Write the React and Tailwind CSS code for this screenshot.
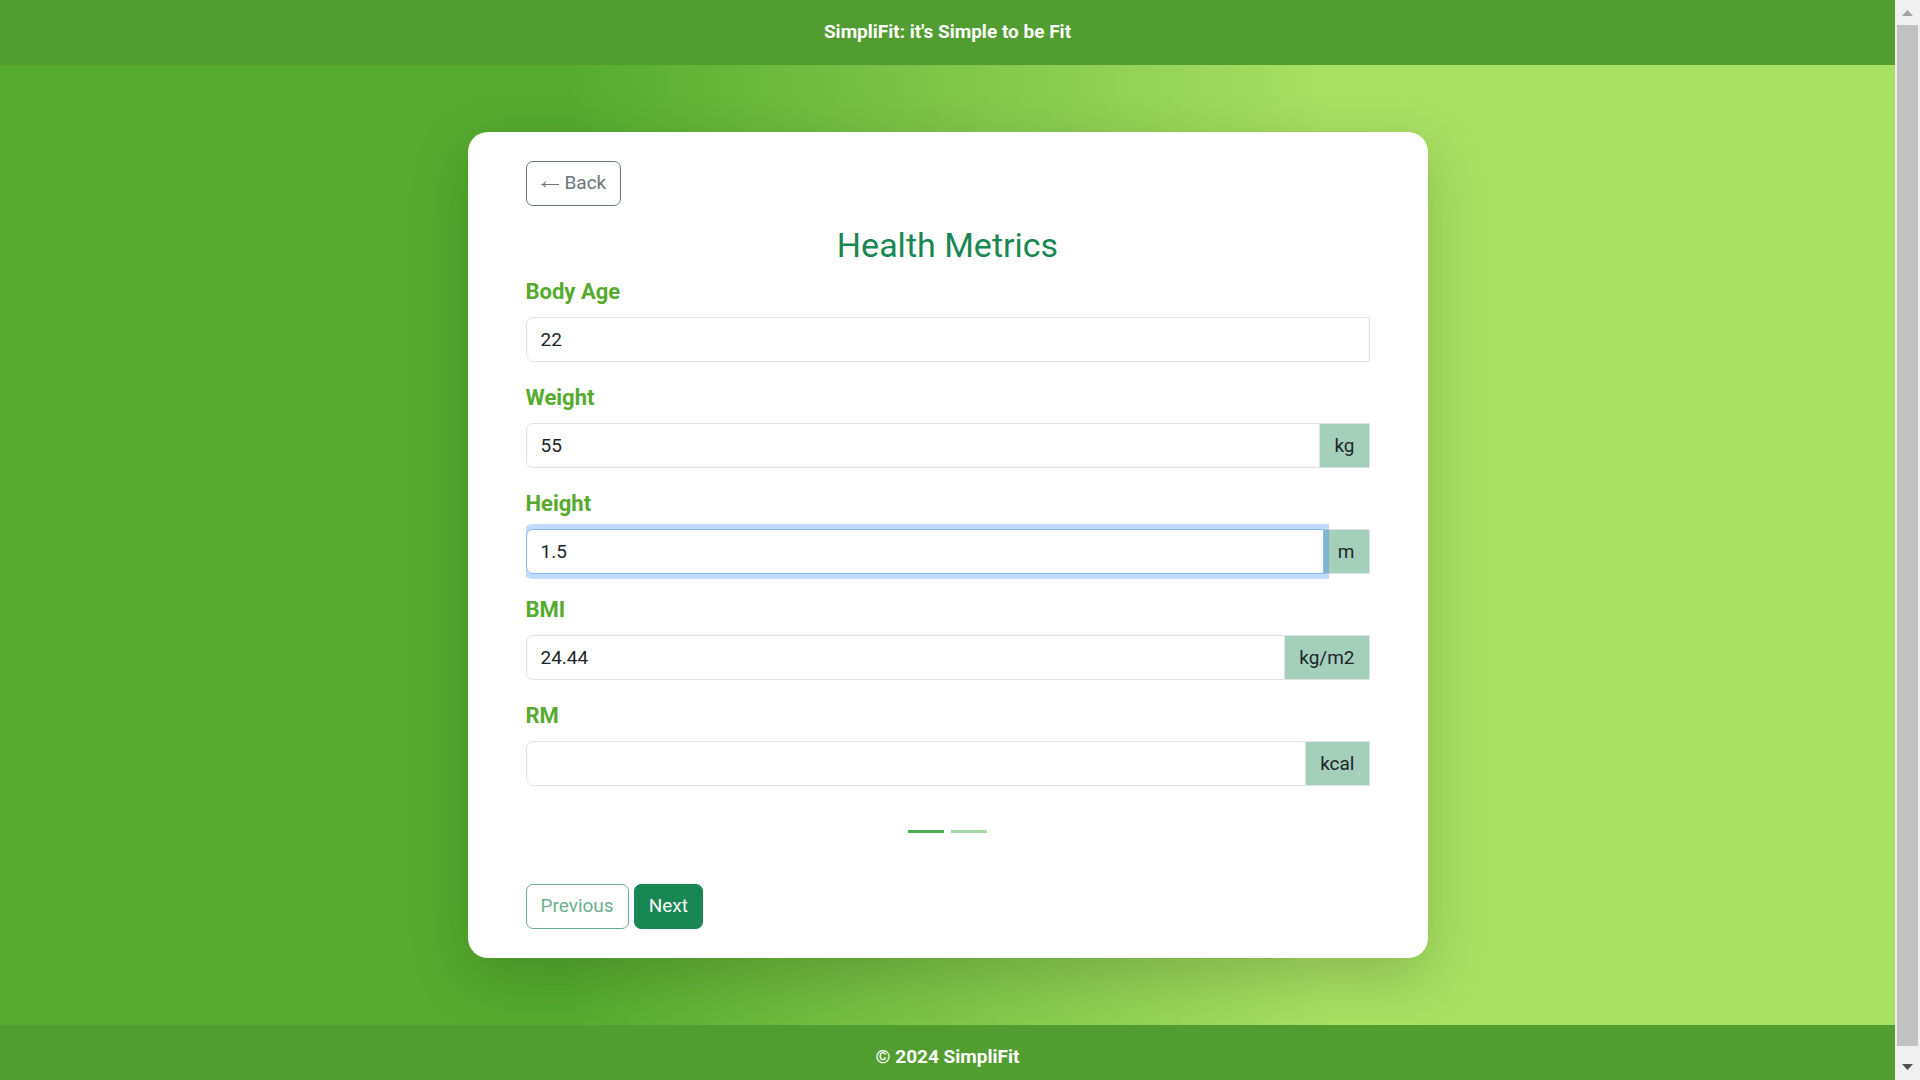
const metrics = [
  { id: "body-age", label: "Body Age", value: "22" },
  { id: "weight", label: "Weight", value: "55", unit: "kg" },
  { id: "height", label: "Height", value: "1.5", unit: "m", active: true },
  { id: "bmi", label: "BMI", value: "24.44", unit: "kg/m2" },
  { id: "rm", label: "RM", value: "", unit: "kcal" },
];

function MetricField({ id, label, value, unit, active }) {
  return (
    <div className="mb-[21px]">
      <label htmlFor={id} className="mb-[11px] block text-[22px] leading-[29px] font-bold text-[#56ab2f]">
        {label}
      </label>
      <div className="flex">
        <input
          id={id}
          type="text"
          defaultValue={value}
          className={
            "h-[45px] min-w-0 flex-1 rounded-l-[7px] border bg-white px-3.5 text-[19px] text-[#212529] outline-none " +
            (active
              ? "z-10 border-[#86b7fe] shadow-[0_0_0_5px_rgba(13,110,253,0.25)]"
              : "border-[#dee2e6]")
          }
        />
        {unit && (
          <span className="-ml-px flex items-center border border-[#dee2e6] bg-[#a3cfbb] px-3.5 text-[19px] text-[#212529]">
            {unit}
          </span>
        )}
      </div>
    </div>
  );
}

function ScrollTrack() {
  return (
    <div className="flex w-[25px] shrink-0 flex-col items-center bg-[#f0f0f0]" aria-hidden="true">
      <svg className="h-[25px] w-[25px]" viewBox="0 0 25 25" fill="#a3a3a3">
        <path d="M12.5 10 18 16H7z" />
      </svg>
      <div className="w-[21px] flex-1 bg-[#c1c1c1]" />
      <svg className="h-[34px] w-[25px]" viewBox="0 0 25 34" fill="#505050">
        <path d="M7 18h11l-5.500 6z" />
      </svg>
    </div>
  );
}

export default function App() {
  return (
    <div className="flex h-screen overflow-hidden font-[Roboto,sans-serif] text-[19px] leading-[29px] text-[#212529]">
      <div className="flex min-w-0 flex-1 flex-col overflow-hidden bg-[linear-gradient(to_right,#56ab2f_30%,#a8e063_70%)]">
        <header className="h-[65px] shrink-0 bg-[#529d30] pt-[17px] text-center font-bold text-white">
          SimpliFit: it's Simple to be Fit
        </header>

        <main className="flex shrink-0 flex-col items-center py-[67px]">
          <section className="w-full max-w-[960px] rounded-[20px] bg-white px-[58px] py-[29px] shadow-[0_19px_58px_rgba(0,0,0,0.175)]">
            <button
              type="button"
              className="flex h-[45px] items-center gap-1.5 rounded-[7px] border border-[#6c757d] px-3.5 pb-0.5 text-[#6c757d]"
            >
              <svg className="mt-1 h-[9px] w-[18px]" viewBox="0 0 18 9" fill="none" stroke="currentColor" aria-hidden="true">
                <path d="M1 4.500H18" />
                <path d="M4.500 1.500Q3.500 4 .500 4.500 3.500 5 4.500 7.500L3.500 4.500z" fill="currentColor" strokeWidth=".6" />
              </svg>
              Back
            </button>

            <div className="mt-[19px] overflow-hidden">
              <h2 className="mb-3 text-center text-[34px] leading-10 font-normal text-[#198754]">
                Health Metrics
              </h2>
              <form>
                {metrics.map((metric) => (
                  <MetricField key={metric.id} {...metric} />
                ))}
              </form>
            </div>

            <div className="mt-[23px] flex justify-center gap-[7px]">
              <button type="button" aria-label="Slide 1" className="h-[3px] w-9 bg-[#4caf50]" />
              <button type="button" aria-label="Slide 2" className="h-[3px] w-9 bg-[#4caf50] opacity-50" />
            </div>

            <div className="mt-[51px] flex gap-[5px]">
              <button
                type="button"
                disabled
                className="h-[45px] rounded-[7px] border border-[#198754] px-3.5 pb-0.5 text-[#198754] opacity-65"
              >
                Previous
              </button>
              <button
                type="button"
                className="h-[45px] rounded-[7px] border border-[#198754] bg-[#198754] px-3.5 pb-0.5 text-white"
              >
                Next
              </button>
            </div>
          </section>
        </main>

        <footer className="h-[65px] shrink-0 bg-[#529d30] pt-[17px] text-center font-bold text-white">
          © 2024 SimpliFit
        </footer>
      </div>
      <ScrollTrack />
    </div>
  );
}
